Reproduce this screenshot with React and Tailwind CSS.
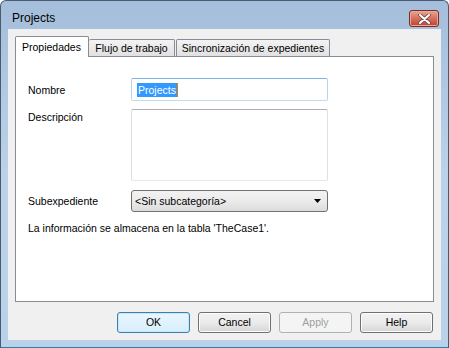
import React from 'react'

const ui = { fontFamily: '"Liberation Sans", Arial, sans-serif' }

function Btn({ label, variant }) {
  // Classic Win7 push button, three flavours
  if (variant === 'default') {
    return (
      <div className="w-[73px] h-[21px] rounded-[3px] border border-[#3c7fb1] bg-gradient-to-b from-[#eaf6fd] to-[#d7effc] flex items-center justify-center text-[10.5px] text-black shadow-[inset_0_0_0_1px_#c7e7f8]">
        {label}
      </div>
    )
  }
  if (variant === 'disabled') {
    return (
      <div className="w-[73px] h-[21px] rounded-[3px] border border-[#adb2b5] bg-[#f4f4f4] flex items-center justify-center text-[10.5px] text-[#a0a0a0]">
        {label}
      </div>
    )
  }
  return (
    <div className="w-[73px] h-[21px] rounded-[3px] border border-[#707070] bg-gradient-to-b from-[#f2f2f2] via-[#ebebeb] to-[#d6d6d6] flex items-center justify-center text-[10.5px] text-black shadow-[inset_0_0_0_1px_#fcfcfc]">
      {label}
    </div>
  )
}

export default function App() {
  const tabs = ['Flujo de trabajo', 'Sincronización de expedientes']

  return (
    <div className="w-[449px] h-[348px] bg-white" style={ui}>
      <div className="w-full h-full rounded-t-[6px] border border-[#4b5b6e] border-b-[#2d7f9e] bg-gradient-to-b from-[#a4bedb] via-[#bcd2ea] to-[#b9d1ea] flex flex-col px-[7px] pb-[7px]">
        {/* Title bar */}
        <div className="h-[29px] flex items-start justify-between">
          <span className="pl-[4px] pt-[10px] text-[12px] leading-[14px] text-black">Projects</span>
          <div className="mt-[9px] mr-[2px] w-[30px] h-[17px] rounded-[3px] border border-[#7e2c22] bg-gradient-to-b from-[#e8a796] via-[#d3705d] to-[#c0412e] flex items-center justify-center shadow-[inset_0_0_0_1px_#eba99c]">
            <svg width="13" height="10" viewBox="0 0 13 10">
              <path d="M2 1 L11 9 M11 1 L2 9" stroke="#6b4a45" strokeWidth="3.6" strokeLinecap="round" />
              <path d="M2 1 L11 9 M11 1 L2 9" stroke="#ffffff" strokeWidth="2" strokeLinecap="round" />
            </svg>
          </div>
        </div>

        {/* Client area */}
        <div className="flex-1 bg-[#f0f0f0] flex flex-col px-[7px] pt-[7px] pb-[7px]">
          {/* Tab strip */}
          <div className="flex items-end h-[20px] relative z-10">
            <div className="w-[74px] h-[21px] -mb-[1px] bg-white border border-b-0 border-[#898c95] rounded-t-[2px] flex items-center pl-[6px] pt-[1px] text-[10.5px] text-black">
              Propiedades
            </div>
            <div className="w-[86px] h-[17px] border border-l-0 border-b-0 border-[#898c95] rounded-t-[2px] bg-gradient-to-b from-[#f3f3f3] to-[#e1e1e1] flex items-center justify-center pt-[1px] text-[10.5px] text-black">
              {tabs[0]}
            </div>
            <div className="w-[154px] h-[17px] ml-[1px] border border-b-0 border-[#898c95] rounded-t-[2px] bg-gradient-to-b from-[#f3f3f3] to-[#e1e1e1] flex items-center justify-center pt-[1px] text-[10.5px] text-black">
              {tabs[1]}
            </div>
          </div>

          {/* Tab panel */}
          <div className="h-[246px] bg-white border border-[#898c95] flex flex-col pl-[12px] text-[10.5px] text-black">
            <div className="mt-[21px] h-[23px] flex items-center">
              <span className="w-[103px] pt-[2px]">Nombre</span>
              <div className="w-[197px] h-[23px] border border-[#7eb4ea] border-b-[#c5daed] border-x-[#b7d4ef] rounded-[2px] flex items-center pl-[5px]">
                <span className="bg-[#3399ff] text-white leading-[14px] px-[1px]">Projects</span>
                <span className="w-[1px] h-[14px] bg-[#e07a00]" />
              </div>
            </div>

            <div className="mt-[8px] flex items-start">
              <span className="w-[103px] pt-[2px] leading-[13px]">Descripción</span>
              <div className="w-[197px] h-[72px] border border-[#abadb3] border-x-[#dbdfe6] border-b-[#e3e9ef] rounded-[2px] bg-white" />
            </div>

            <div className="mt-[9px] h-[22px] flex items-center">
              <span className="w-[103px] pt-[2px]">Subexpediente</span>
              <div className="w-[197px] h-[22px] border border-[#707070] rounded-[3px] bg-gradient-to-b from-[#f2f2f2] via-[#ebebeb] to-[#dcdcdc] flex items-center justify-between pl-[3px] pr-[6px]">
                <span className="pt-[1px]">&lt;Sin subcategoría&gt;</span>
                <svg width="7" height="4" viewBox="0 0 7 4">
                  <path d="M0 0 H7 L3.5 4 Z" fill="#000" />
                </svg>
              </div>
            </div>

            <div className="mt-[10px] leading-[13px]">La información se almacena en la tabla 'TheCase1'.</div>
          </div>

          {/* Buttons */}
          <div className="mt-[10px] flex justify-end gap-[8px] pr-[1px]">
            <Btn label="OK" variant="default" />
            <Btn label="Cancel" />
            <Btn label="Apply" variant="disabled" />
            <Btn label="Help" />
          </div>
        </div>
      </div>
    </div>
  )
}
